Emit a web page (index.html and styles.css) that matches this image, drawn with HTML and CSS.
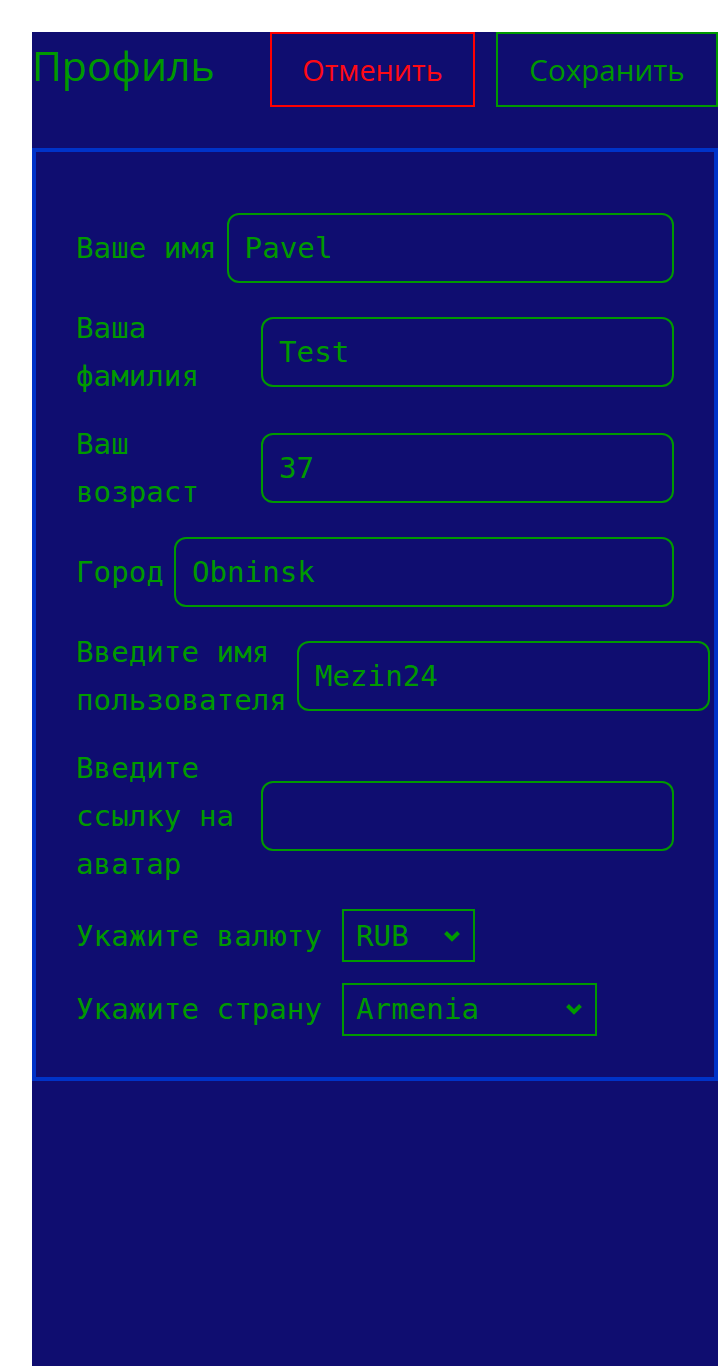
FILE: index.html
```html
<!DOCTYPE html>
<html lang="ru">
<head>
<meta charset="utf-8">
<title>Профиль</title>
<link rel="stylesheet" href="styles.css">
</head>
<body>
<div class="page">
  <header class="header">
    <h1 class="title">Профиль</h1>
    <div class="actions">
      <button class="btn btn-cancel" type="button">Отменить</button>
      <button class="btn btn-save" type="button">Сохранить</button>
    </div>
  </header>
  <form class="card">
    <div class="row">
      <label class="label" for="f1">Ваше имя</label>
      <input class="field" id="f1" type="text" value="Pavel">
    </div>
    <div class="row">
      <label class="label" for="f2">Ваша фамилия</label>
      <input class="field" id="f2" type="text" value="Test">
    </div>
    <div class="row">
      <label class="label" for="f3">Ваш возраст</label>
      <input class="field" id="f3" type="text" value="37">
    </div>
    <div class="row">
      <label class="label" for="f4">Город</label>
      <input class="field" id="f4" type="text" value="Obninsk">
    </div>
    <div class="row">
      <label class="label" for="f5">Введите имя пользователя</label>
      <input class="field" id="f5" type="text" value="Mezin24">
    </div>
    <div class="row">
      <label class="label" for="f6">Введите ссылку на аватар</label>
      <input class="field" id="f6" type="text" value="">
    </div>
    <div class="row row-select">
      <label class="label label-nowrap" for="f7">Укажите валюту</label>
      <div class="select-wrap select-currency">
        <select class="select" id="f7">
          <option>RUB</option>
          <option>USD</option>
          <option>EUR</option>
        </select>
        <svg class="chevron" width="18" height="12" viewBox="0 0 18 12"><path d="M2.5 2.5 L9 9 L15.5 2.5" fill="none" stroke="currentColor" stroke-width="4"/></svg>
      </div>
    </div>
    <div class="row row-select">
      <label class="label label-nowrap" for="f8">Укажите страну</label>
      <div class="select-wrap select-country">
        <select class="select" id="f8">
          <option>Armenia</option>
          <option>Russia</option>
          <option>Belarus</option>
        </select>
        <svg class="chevron" width="18" height="12" viewBox="0 0 18 12"><path d="M2.5 2.5 L9 9 L15.5 2.5" fill="none" stroke="currentColor" stroke-width="4"/></svg>
      </div>
    </div>
  </form>
</div>
</body>
</html>
```

FILE: styles.css
```css
html, body {
  background: #ffffff;
}

body {
  margin: 32px 0 0 32px;
}

.page {
  width: 686px;
  min-height: 1334px;
  background: #0f0d70;
  color: #009900;
}

.header {
  display: flex;
  align-items: baseline;
  margin-bottom: 41px;
}

.title {
  margin: 0;
  font-family: "Open Sans", "Noto Sans", sans-serif;
  font-weight: 400;
  font-size: 41px;
  line-height: normal;
  color: #009900;
}

.actions {
  display: flex;
  gap: 21px;
  margin-left: auto;
}

.btn {
  height: 75px;
  padding: 0 30px;
  background: transparent;
  border: 2px solid;
  border-radius: 0;
  font-family: "Open Sans", "Noto Sans", sans-serif;
  font-size: 28.8px;
  line-height: normal;
}

.btn-cancel {
  width: 205px;
  color: #ff0a14;
  border-color: #ff0000;
}

.btn-save {
  width: 222px;
  color: #009900;
  border-color: #009900;
  font-size: 29.6px;
}

.card {
  display: flex;
  flex-direction: column;
  gap: 20.7px;
  margin: 0;
  padding: 61px 40px 41px;
  border: 4px solid #0033c8;
}

.row {
  display: flex;
  align-items: center;
  gap: 10px;
}

.row-select {
  gap: 20px;
}

.label {
  flex: 0 1 auto;
  font-family: "DejaVu Sans Mono", monospace;
  font-size: 29.2px;
  line-height: 48px;
  color: #009900;
}

.label-nowrap {
  flex-shrink: 0;
  white-space: nowrap;
}

.field {
  flex: 1 0 413px;
  box-sizing: border-box;
  height: 70px;
  min-width: 413px;
  margin: 0;
  padding: 0 16px;
  background: transparent;
  border: 2px solid #009900;
  border-radius: 12px;
  outline: none;
  font-family: "DejaVu Sans Mono", monospace;
  font-size: 29.2px;
  color: #009900;
}

.select-wrap {
  position: relative;
  flex: 0 0 auto;
  color: #009900;
}

.select-currency {
  width: 133px;
}

.select-country {
  width: 255px;
}

.select {
  display: block;
  box-sizing: border-box;
  width: 100%;
  height: 53px;
  margin: 0;
  padding: 0 12px;
  -webkit-appearance: none;
  appearance: none;
  background: transparent;
  border: 2px solid #009900;
  border-radius: 0;
  outline: none;
  font-family: "DejaVu Sans Mono", monospace;
  font-size: 29.2px;
  color: #009900;
}

.chevron {
  position: absolute;
  right: 14px;
  top: 50%;
  margin-top: -6px;
  pointer-events: none;
}
```
